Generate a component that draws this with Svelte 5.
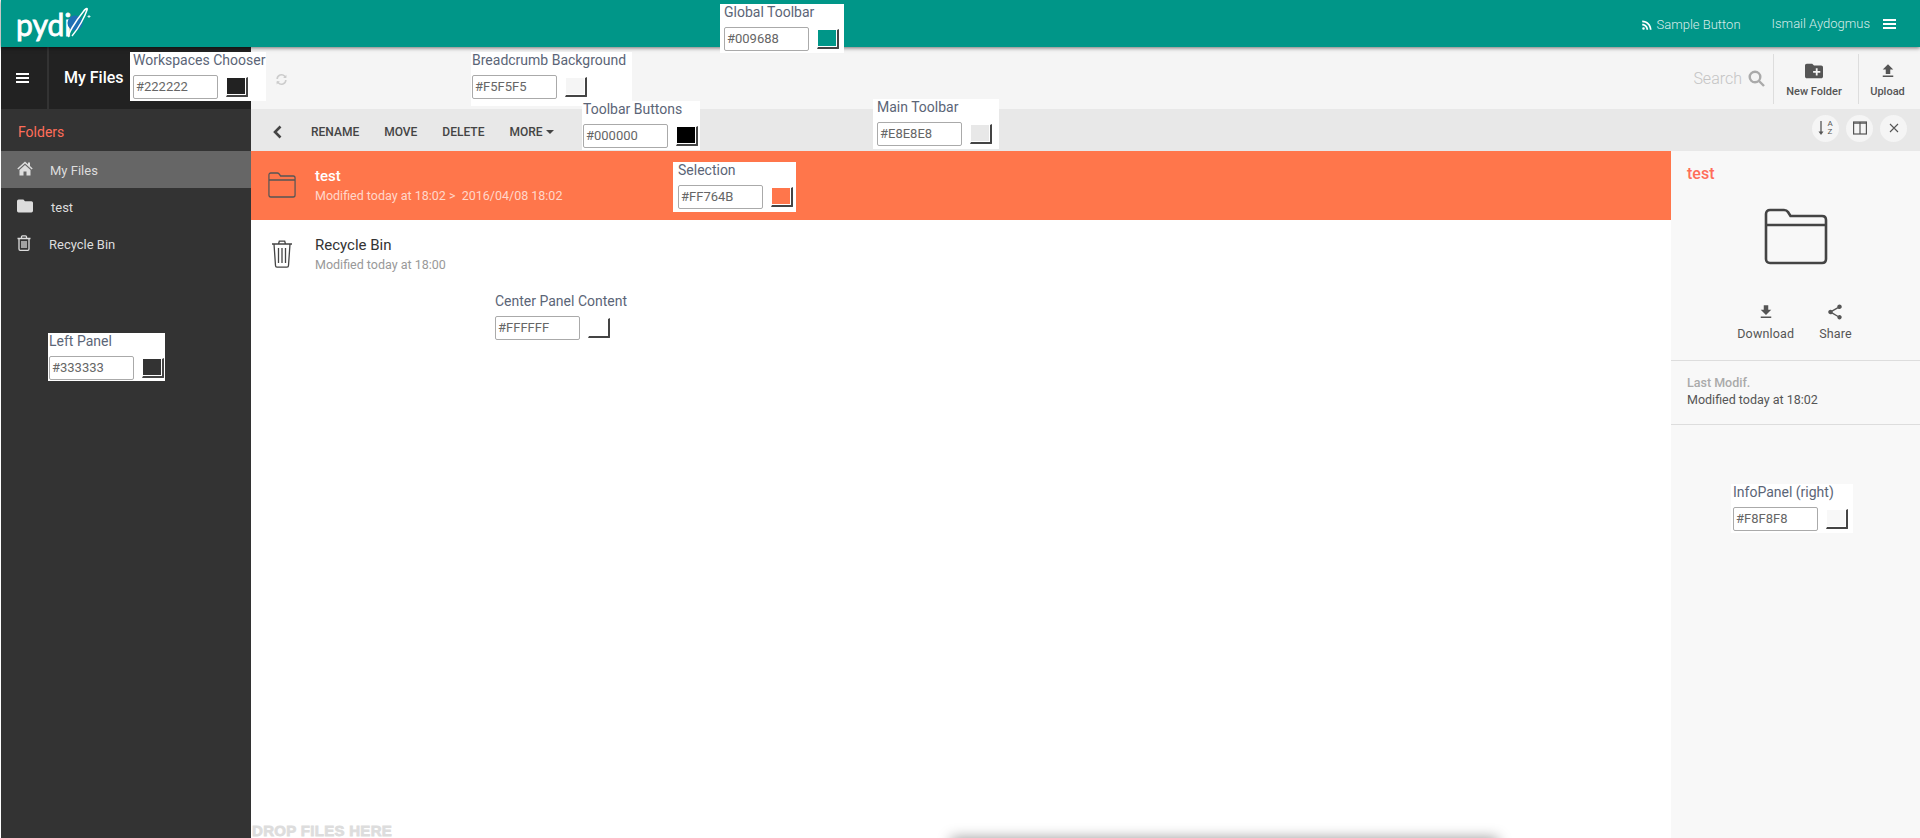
<script>
  const pickers = [
    { label: 'Global Toolbar', value: '#009688', color: '#009688', x: 720, y: 4, w: 124, h: 49, pad: 4 },
    { label: 'Workspaces Chooser', value: '#222222', color: '#222222', x: 130, y: 52, w: 136, h: 49, pad: 3 },
    { label: 'Breadcrumb Background', value: '#F5F5F5', color: '#F5F5F5', x: 471, y: 52, w: 161, h: 54, pad: 1 },
    { label: 'Toolbar Buttons', value: '#000000', color: '#000000', x: 582, y: 101, w: 118, h: 49, pad: 1 },
    { label: 'Main Toolbar', value: '#E8E8E8', color: '#E8E8E8', x: 873, y: 99, w: 126, h: 50, pad: 4 },
    { label: 'Selection', value: '#FF764B', color: '#FF764B', x: 673, y: 162, w: 123, h: 50, pad: 5 },
    { label: 'Center Panel Content', value: '#FFFFFF', color: '#FFFFFF', x: 492, y: 293, w: 132, h: 50, pad: 3 },
    { label: 'Left Panel', value: '#333333', color: '#333333', x: 48, y: 333, w: 117, h: 48, pad: 1 },
    { label: 'InfoPanel (right)', value: '#F8F8F8', color: '#F8F8F8', x: 1731, y: 484, w: 122, h: 49, pad: 2 },
  ];

  const actions = ['RENAME', 'MOVE', 'DELETE'];
</script>

<div class="app">
  <header class="global">
    <div class="logo">
      <span class="logo-text">pydi</span>
      <svg class="logo-mark" width="24" height="32" viewBox="0 0 24 32">
        <circle cx="8" cy="16" r="7.500" fill="#1f6fb5" />
        <path d="M2 30C0 28 8 15 16 5c2-3 5-5 4-2-2 6-8 18-15 26" fill="none" stroke="#fff" stroke-width="1.500" />
        <path d="M22 8v3M20.500 9.500h3" stroke="#fff" stroke-width=".8" />
      </svg>
    </div>
    <div class="global-right">
      <span class="sample">
        <svg width="12" height="12" viewBox="2 3 20 18" fill="#fff"><path d="M6.180 15.640a2.180 2.180 0 1 1 0 4.360 2.180 2.180 0 0 1 0-4.360zM4 4.440v2.830c7.030 0 12.730 5.700 12.730 12.730h2.830c0-8.590-6.970-15.560-15.560-15.560zm0 5.660v2.830c3.900 0 7.070 3.170 7.070 7.070h2.830c0-5.470-4.430-9.900-9.900-9.900z" /></svg>
        Sample Button
      </span>
      <span class="user">Ismail Aydogmus</span>
      <span class="bars white"><i></i><i></i><i></i></span>
    </div>
  </header>

  <div class="shell">
    <aside class="left">
      <div class="chooser">
        <div class="chooser-menu"><span class="bars"><i></i><i></i><i></i></span></div>
        <div class="chooser-name">My Files</div>
      </div>
      <div class="folders">
        <div class="folders-title">Folders</div>
        <div class="tree-row active">
          <svg width="16" height="15" viewBox="0 0 16 15" fill="#ddd"><path d="M8 .5L.3 7.500l1 1.100L8 2.600l6.700 6 1-1.100L13 5V1.500h-2v1.700zM8 4L2.500 9v5.500h4v-4h3v4h4V9z" /></svg>
          <span class="tree-a">My Files</span>
        </div>
        <div class="tree-row">
          <svg width="16" height="14" viewBox="2 4 20 16" fill="#ddd"><path d="M10 4H4a2 2 0 0 0-2 2v12c0 1.100.9 2 2 2h16a2 2 0 0 0 2-2V8a2 2 0 0 0-2-2h-8l-2-2z" /></svg>
          <span class="tree-b">test</span>
        </div>
        <div class="tree-row">
          <svg width="14" height="16" viewBox="0 0 14 16" fill="none" stroke="#ddd" stroke-width="1.300"><path d="M.5 3.500h13M2 3.500v10.500c0 .8.500 1.300 1.200 1.300h7.600c.7 0 1.200-.5 1.200-1.300V3.500M4.500 3.500V1.800c0-.6.400-1 1-1h3c.6 0 1 .4 1 1v1.700M5 6v7M7 6v7M9 6v7" /></svg>
          <span class="tree-c">Recycle Bin</span>
        </div>
      </div>
    </aside>

    <div class="main">
      <div class="breadcrumb">
        <svg class="refresh" width="13" height="13" viewBox="0 0 24 24" fill="none" stroke="#ccc" stroke-width="3"><path d="M4 11a8 8 0 0 1 14-5l2 2M20 13a8 8 0 0 1-14 5l-2-2" /><path d="M21 3v6h-6M3 21v-6h6" fill="#ccc" stroke="none" /></svg>
        <div class="search">
          <span>Search</span>
          <svg width="17" height="17" viewBox="0 0 17 17" fill="none" stroke="#aaa" stroke-width="2.400"><circle cx="7" cy="7" r="5.300" /><path d="M11 11l5 5" /></svg>
        </div>
        <div class="big-btn new-folder">
          <svg width="18" height="18" viewBox="2 3 20 18" fill="#555"><path d="M10 4H4c-1.110 0-2 .89-2 2v12c0 1.100.89 2 2 2h16c1.100 0 2-.9 2-2V8c0-1.110-.9-2-2-2h-8l-2-2zm9 10h-3v3h-2v-3h-3v-2h3V9h2v3h3v2z" /></svg>
          <span>New Folder</span>
        </div>
        <div class="big-btn upload">
          <svg width="18" height="18" viewBox="0 0 24 24" fill="#555"><path d="M9 16h6v-6h4l-7-7-7 7h4v6zm-4 2h14v2H5v-2z" /></svg>
          <span>Upload</span>
        </div>
      </div>

      <div class="toolbar">
        <svg class="back" width="9" height="14" viewBox="0 0 9 14" fill="none" stroke="#444" stroke-width="2.600"><path d="M7.500 1.500L2 7l5.500 5.500" /></svg>
        <div class="actions">
          {#each actions as action}
            <span>{action}</span>
          {/each}
          <span class="more">MORE<i class="caret"></i></span>
        </div>
        <div class="round-btns">
          <div class="round">
            <svg width="12" height="16" viewBox="0 0 12 16" fill="none" stroke="#555" stroke-width="1.300"><path d="M3 1v12" /><path d="M.5 11.500h5L3 15z" fill="#555" stroke="none" /></svg>
            <span class="az"><b>A</b><b>Z</b></span>
          </div>
          <div class="round">
            <svg width="14" height="14" viewBox="0 0 14 14" fill="none" stroke="#555" stroke-width="1.200"><rect x=".6" y="1" width="12.800" height="12" /><path d="M7 1v12M.6 2.200h12.800" /></svg>
          </div>
          <div class="round">
            <svg width="10" height="10" viewBox="0 0 10 10" fill="none" stroke="#555" stroke-width="1.100"><path d="M1 1l8 8M9 1l-8 8" /></svg>
          </div>
        </div>
      </div>

      <div class="content">
        <div class="list">
          <div class="file selected">
            <svg class="file-icon" width="28" height="26" viewBox="0 0 30 26" preserveAspectRatio="none" fill="none" stroke="#555" stroke-width="1.300"><path d="M1 3c0-1 .6-2 2-2h7c1 0 1.500.5 2 1l1.500 2H27c1.300 0 2 .7 2 2v17c0 1.300-.7 2-2 2H3c-1.400 0-2-.7-2-2V3zM1 8h28" /></svg>
            <div class="file-text">
              <div class="file-name">test</div>
              <div class="file-meta">Modified today at 18:02 &gt;&nbsp; 2016/04/08 18:02</div>
            </div>
          </div>
          <div class="file">
            <svg class="file-icon trash" width="28" height="28" viewBox="0 0 22 28" fill="none" stroke="#444" stroke-width="1.300"><path d="M1 4h20M3 4l1.500 21.500c0 1 .6 1.700 1.500 1.700h10c.9 0 1.500-.7 1.500-1.700L19 4M7.500 4l.8-2.800h5.400L14.500 4M7.500 8v15M11 8v15M14.500 8v15" /></svg>
            <div class="file-text">
              <div class="file-name">Recycle Bin</div>
              <div class="file-meta">Modified today at 18:00</div>
            </div>
          </div>
          <div class="drop">DROP FILES HERE</div>
          <div class="peek"></div>
        </div>

        <div class="info">
          <div class="info-title">test</div>
          <div class="info-icon">
            <svg width="64" height="58" viewBox="0 0 64 58" fill="none" stroke="#444" stroke-width="2.600"><path d="M2 6c0-2.500 1.500-4 4-4h14c2 0 3.200.8 4 2l2.500 4H58c2.500 0 4 1.500 4 4v39c0 2.500-1.500 4-4 4H6c-2.500 0-4-1.500-4-4V6zM2 17h60" /></svg>
          </div>
          <div class="info-actions">
            <div class="info-action">
              <svg width="18" height="18" viewBox="0 0 24 24" fill="#555"><path d="M19 9h-4V3H9v6H5l7 7 7-7zM5 18v2h14v-2H5z" /></svg>
              <span>Download</span>
            </div>
            <div class="info-action">
              <svg width="18" height="18" viewBox="0 0 24 24" fill="#555"><path d="M18 16.080c-.76 0-1.440.3-1.960.77L8.910 12.700c.05-.23.09-.46.09-.7s-.04-.47-.09-.7l7.050-4.110c.54.5 1.250.81 2.040.81 1.660 0 3-1.340 3-3s-1.340-3-3-3-3 1.340-3 3c0 .24.04.47.09.7L8.040 9.810C7.500 9.310 6.790 9 6 9c-1.660 0-3 1.340-3 3s1.340 3 3 3c.79 0 1.500-.31 2.040-.81l7.120 4.160c-.05.21-.08.43-.08.65 0 1.610 1.310 2.920 2.920 2.920 1.610 0 2.920-1.310 2.920-2.920s-1.310-2.920-2.920-2.920z" /></svg>
              <span>Share</span>
            </div>
          </div>
          <div class="info-block">
            <div class="info-key">Last Modif.</div>
            <div class="info-val">Modified today at 18:02</div>
          </div>
        </div>
      </div>
    </div>
  </div>

  {#each pickers as p}
    <div class="picker" style={`left:${p.x}px;top:${p.y}px;width:${p.w}px;height:${p.h}px;padding-left:${p.pad}px`}>
      <div class="picker-label">{p.label}</div>
      <div class="picker-row">
        <div class="picker-input">{p.value}</div>
        <div class="swatch"><div class="swatch-color" style={`background:${p.color}`}></div></div>
      </div>
    </div>
  {/each}
</div>

<style>
  :global(body) {
    margin: 0;
    background: #fff;
  }

  .app {
    position: relative;
    height: 838px;
    overflow: hidden;
    padding-left: 1px;
    box-sizing: border-box;
    display: flex;
    flex-direction: column;
    font-family: Roboto, "Liberation Sans", sans-serif;
    font-size: 13px;
    color: #333;
  }

  /* top bar */
  .global {
    height: 47px;
    flex: none;
    background: #009688;
    box-shadow: 0 1px 4px rgba(0, 0, 0, .55);
    position: relative;
    z-index: 2;
    display: flex;
    justify-content: space-between;
    align-items: center;
  }
  .logo {
    display: flex;
    align-items: center;
    margin-left: 15px;
    height: 47px;
  }
  .logo-text {
    font-family: Lato, sans-serif;
    font-size: 30px;
    line-height: 40px;
    color: #fff;
    -webkit-text-stroke: .8px #fff;
  }
  .logo-mark {
    margin-left: -4px;
    margin-top: -1px;
  }
  .global-right {
    display: flex;
    align-items: center;
    color: rgba(255, 255, 255, .85);
    font-size: 13px;
    font-weight: 300;
    margin-right: 24px;
  }
  .sample {
    display: flex;
    align-items: center;
    gap: 4px;
    margin-right: 31px;
    font-size: 13px;
    padding-top: 2px;
  }
  .user {
    margin-right: 13px;
  }
  .bars {
    display: flex;
    flex-direction: column;
    gap: 2px;
    width: 13px;
  }
  .bars i {
    display: block;
    height: 2px;
    background: #fff;
  }

  .shell {
    flex: 1;
    display: flex;
    min-height: 0;
  }

  /* left column */
  .left {
    width: 250px;
    flex: none;
    display: flex;
    flex-direction: column;
    background: #333;
    color: #ddd;
  }
  .chooser {
    height: 62px;
    background: #222;
    display: flex;
    color: #fff;
  }
  .chooser-menu {
    width: 48px;
    flex: none;
    border-right: 2px solid #333;
    display: flex;
    align-items: center;
    padding-left: 15px;
    box-sizing: border-box;
  }
  .chooser-name {
    margin-left: 15px;
    line-height: 62px;
    font-size: 16px;
    font-weight: 500;
  }
  .folders-title {
    height: 42px;
    line-height: 46px;
    padding-left: 17px;
    font-size: 14px;
    color: #ff6e5a;
  }
  .tree-row {
    height: 37px;
    display: flex;
    align-items: center;
    padding-left: 16px;
    box-sizing: border-box;
  }
  .tree-row svg {
    margin-top: -2px;
    flex: none;
  }
  .tree-row span {
    padding-top: 2px;
  }
  .tree-row.active {
    background: #666;
  }
  .tree-a {
    margin-left: 17px;
  }
  .tree-b {
    margin-left: 18px;
  }
  .tree-c {
    margin-left: 18px;
  }

  /* center + right */
  .main {
    flex: 1;
    min-width: 0;
    display: flex;
    flex-direction: column;
  }
  .breadcrumb {
    height: 62px;
    background: #f5f5f5;
    display: flex;
    align-items: center;
    padding-left: 24px;
  }
  .refresh {
    margin-top: 2px;
  }
  .search {
    margin-left: auto;
    display: flex;
    align-items: center;
    gap: 6px;
    color: #c4c4c4;
    font-size: 16px;
    font-weight: 300;
    margin-right: 8px;
  }
  .big-btn {
    height: 50px;
    margin-top: 2px;
    border-left: 1px solid #ddd;
    display: flex;
    flex-direction: column;
    align-items: center;
    font-size: 11px;
    font-weight: 500;
    color: #555;
    box-sizing: border-box;
    padding-top: 8px;
    padding-right: 4px;
    gap: 5px;
  }
  .big-btn svg {
    height: 18px;
  }
  .new-folder {
    width: 85px;
  }
  .upload {
    width: 62px;
  }

  .toolbar {
    height: 42px;
    box-sizing: border-box;
    padding-top: 3px;
    background: #e8e8e8;
    display: flex;
    align-items: center;
    padding-left: 22px;
    padding-right: 13px;
  }
  .actions {
    display: flex;
    gap: 25px;
    margin-left: 29px;
    font-size: 12px;
    font-weight: 500;
    color: #444;
  }
  .more {
    display: flex;
    align-items: center;
  }
  .caret {
    width: 0;
    height: 0;
    margin-left: 3px;
    border-left: 4px solid transparent;
    border-right: 4px solid transparent;
    border-top: 4px solid #444;
  }
  .round-btns {
    margin-left: auto;
    display: flex;
    gap: 7px;
    margin-top: -7px;
  }
  .round {
    width: 27px;
    height: 27px;
    border-radius: 50%;
    background: #f5f5f5;
    display: flex;
    align-items: center;
    justify-content: center;
  }
  .az {
    display: flex;
    flex-direction: column;
    font-size: 8px;
    line-height: 8px;
    margin-left: -3px;
    color: #555;
  }
  .az b {
    font-weight: 400;
  }

  .content {
    flex: 1;
    min-height: 0;
    display: flex;
  }
  .list {
    flex: 1;
    min-width: 0;
    position: relative;
    background: #fff;
  }
  .file {
    height: 69px;
    display: flex;
    align-items: center;
    box-sizing: border-box;
  }
  .file.selected {
    background: #ff764b;
    color: #fff;
  }
  .file-icon {
    flex: none;
    margin-left: 17px;
    margin-top: -2px;
  }
  .file-text {
    margin-left: 19px;
  }
  .file-name {
    font-size: 15px;
    line-height: 20px;
    color: #333;
  }
  .selected .file-name {
    color: #fff;
    font-weight: 500;
  }
  .file-meta {
    font-size: 12.500px;
    line-height: 20px;
    color: #999;
  }
  .selected .file-meta {
    color: rgba(255, 255, 255, .72);
  }
  .drop {
    position: absolute;
    left: 1px;
    bottom: 0;
    font-family: "Liberation Sans", sans-serif;
    font-size: 15px;
    line-height: 15px;
    font-weight: 700;
    letter-spacing: .3px;
    color: #ddd;
    -webkit-text-stroke: .8px #ddd;
  }
  .peek {
    position: absolute;
    left: 700px;
    width: 547px;
    top: 100%;
    height: 40px;
    box-shadow: 0 0 14px rgba(0, 0, 0, .4);
  }

  .info {
    width: 249px;
    flex: none;
    background: #f8f8f8;
    position: relative;
  }
  .info-title {
    padding: 13px 16px 0;
    font-size: 16px;
    line-height: 20px;
    font-weight: 500;
    color: #ff6e5a;
  }
  .info-icon {
    display: flex;
    justify-content: center;
    margin-top: 24px;
  }
  .info-actions {
    display: flex;
    justify-content: center;
    gap: 25px;
    margin-top: 37px;
    height: 58px;
    box-sizing: border-box;
    border-bottom: 1px solid #ddd;
    padding-right: 2px;
  }
  .info-action {
    display: flex;
    flex-direction: column;
    align-items: center;
    gap: 5px;
    font-size: 12.500px;
    letter-spacing: .15px;
    color: #555;
    height: 40px;
  }
  .info-block {
    height: 64px;
    box-sizing: border-box;
    border-bottom: 1px solid #ddd;
    padding: 14px 16px 0;
  }
  .info-key {
    font-size: 12.500px;
    line-height: 16px;
    font-weight: 500;
    color: #aaa;
  }
  .info-val {
    font-size: 12.500px;
    line-height: 18px;
    color: #555;
  }

  /* colour pickers laid over the page */
  .picker {
    position: absolute;
    z-index: 5;
    background: #fff;
    box-sizing: border-box;
  }
  .picker-label {
    height: 23px;
    line-height: 17px;
    font-size: 14px;
    color: #5b6577;
    white-space: nowrap;
  }
  .picker-row {
    display: flex;
    align-items: center;
    gap: 8px;
  }
  .picker-input {
    width: 85px;
    height: 24px;
    box-sizing: border-box;
    border: 1px solid #aaa;
    border-radius: 2px;
    padding-left: 2px;
    font-size: 13px;
    line-height: 22px;
    color: #666;
  }
  .swatch {
    width: 22px;
    height: 20px;
    box-sizing: border-box;
    border-right: 2px solid #444;
    border-bottom: 2px solid #444;
    border-left: 1px solid #fff;
    border-top: 1px solid #fff;
    border-bottom-right-radius: 1px;
    padding: 0 1px 1px 0;
  }
  .swatch-color {
    width: 100%;
    height: 100%;
  }
</style>
